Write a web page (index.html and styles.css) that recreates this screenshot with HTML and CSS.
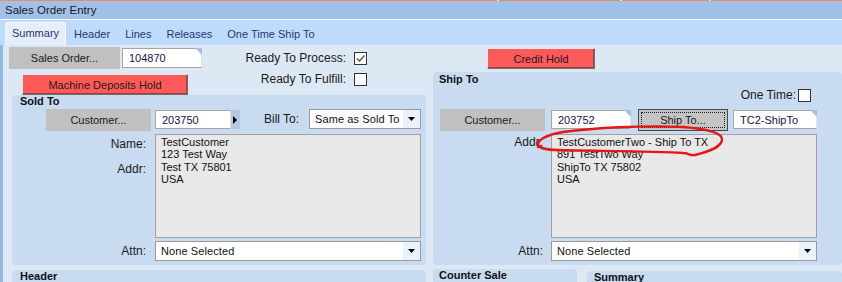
FILE: index.html
```html
<!DOCTYPE html>
<html lang="en">
<head>
    <meta charset="UTF-8">
    <meta name="viewport" content="width=device-width, initial-scale=1.0">
    <title>Sales Order Entry</title>
    <link rel="stylesheet" href="styles.css">
</head>
<body>
    <div class="accent"><span class="seg s1"></span><span class="seg s2"></span><span class="seg s3"></span><span class="seg s4"></span></div>
    <div class="titlebar">Sales Order Entry</div>

    <!-- Tabs -->
    <div class="tabs">
        <div class="tab active">Summary</div>
        <div class="tab">Header</div>
        <div class="tab">Lines</div>
        <div class="tab">Releases</div>
        <div class="tab">One Time Ship To</div>
    </div>

    <div class="content">
        <div class="col-left">
            <div class="order-area">
                <div class="order-col">
                    <div class="order-row">
                        <button class="btn gray order-btn">Sales Order...</button>
                        <div class="input fold order-input">104870</div>
                    </div>
                    <button class="btn red machine-btn">Machine Deposits Hold</button>
                </div>
                <div class="check-col">
                    <div class="check-row">
                        <span class="label">Ready To Process:</span>
                        <span class="check"><svg width="11" height="11" viewBox="0 0 11 11"><path d="M2 5.5 L4.5 8 L9.5 2.5" fill="none" stroke="#555" stroke-width="1.4"/></svg></span>
                    </div>
                    <div class="check-row">
                        <span class="label">Ready To Fulfill:</span>
                        <span class="check"></span>
                    </div>
                </div>
            </div>

            <!-- Sold To -->
            <section class="panel sold-to">
                <h3 class="panel-title">Sold To</h3>
                <div class="cust-row">
                    <button class="btn gray cust-btn">Customer...</button>
                    <div class="input-group">
                        <div class="input sold-input">203750</div>
                        <span class="arrow-btn"><svg width="5" height="8" viewBox="0 0 5 8"><path d="M0 0 L4 4 L0 8 Z" fill="#000"/></svg></span>
                    </div>
                    <span class="label bill-label">Bill To:</span>
                    <div class="select bill-select">
                        <span class="select-text">Same as Sold To</span>
                        <span class="select-arrow"><svg width="7" height="4" viewBox="0 0 7 4"><path d="M0 0 L7 0 L3.5 4 Z" fill="#000"/></svg></span>
                    </div>
                </div>
                <div class="field-row">
                    <div class="field-labels sold-labels">
                        <span class="label name-label">Name:</span>
                        <span class="label addr-label">Addr:</span>
                    </div>
                    <div class="textarea">TestCustomer<br>123 Test Way<br>Test TX 75801<br>USA</div>
                </div>
                <div class="attn-row">
                    <span class="label attn-label sold-labels">Attn:</span>
                    <div class="select attn-select">
                        <span class="select-text">None Selected</span>
                        <span class="select-arrow"><svg width="7" height="4" viewBox="0 0 7 4"><path d="M0 0 L7 0 L3.5 4 Z" fill="#000"/></svg></span>
                    </div>
                </div>
            </section>

            <section class="panel header-panel">
                <h3 class="panel-title">Header</h3>
            </section>
        </div>

        <div class="col-right">
            <div class="credit-row">
                <button class="btn red credit-btn">Credit Hold</button>
            </div>

            <!-- Ship To -->
            <section class="panel ship-to">
                <h3 class="panel-title">Ship To</h3>
                <div class="one-time">
                    <span class="label">One Time:</span>
                    <span class="check"></span>
                </div>
                <div class="cust-row ship-row">
                    <button class="btn gray cust-btn">Customer...</button>
                    <div class="input fold ship-cust">203752</div>
                    <button class="btn focus shipto-btn"><span class="focus-ring">Ship To...</span></button>
                    <div class="input fold ship-code">TC2-ShipTo</div>
                </div>
                <div class="field-row">
                    <div class="field-labels ship-labels">
                        <span class="label ship-addr">Addr:</span>
                    </div>
                    <div class="textarea">TestCustomerTwo - Ship To TX<br>891 TestTwo Way<br>ShipTo TX 75802<br>USA</div>
                </div>
                <div class="attn-row">
                    <span class="label attn-label ship-labels">Attn:</span>
                    <div class="select attn-select">
                        <span class="select-text">None Selected</span>
                        <span class="select-arrow"><svg width="7" height="4" viewBox="0 0 7 4"><path d="M0 0 L7 0 L3.5 4 Z" fill="#000"/></svg></span>
                    </div>
                </div>
                <!-- hand-drawn highlight over the first address line -->
                <svg class="scribble" width="196" height="38" viewBox="0 0 196 38">
                    <path d="M5 23 C3 16, 13 11, 30 8 C60 4, 110 1, 150 3 C175 5, 190 9, 189 16 C188 23, 178 27, 162 31 C157 32, 156 29, 150 29 C120 27, 60 27, 25 26 C14 26, 6 25, 4 19" fill="none" stroke="#e81515" stroke-width="2.4" stroke-linecap="round"/>
                </svg>
            </section>

            <div class="bottom-row">
                <section class="panel counter-panel">
                    <h3 class="panel-title">Counter Sale</h3>
                </section>
                <section class="panel summary-panel">
                    <h3 class="panel-title">Summary</h3>
                </section>
            </div>
        </div>
    </div>
</body>
</html>
```

FILE: styles.css
```css
body {
    margin: 0;
    width: 842px;
    height: 282px;
    overflow: hidden;
    font-family: "Liberation Sans", Arial, sans-serif;
    color: #111;
    background-color: #dde8f5;
}
.accent {
    display: flex;
    height: 1px;
    gap: 2px;
    background-color: #fff;
}
.seg {
    background-color: #f28a5a;
}
.s1 { width: 497px; }
.s2 { width: 121px; }
.s3 { width: 87px; }
.s4 { flex: 1; }
.titlebar {
    height: 18px;
    line-height: 18px;
    padding-left: 5px;
    font-size: 11.5px;
    background-color: #9fc1e9;
    color: #1a1a1a;
}
.tabs {
    display: flex;
    align-items: flex-end;
    gap: 1px;
    height: 26px;
    padding-left: 5px;
    border-top: 1px solid #f4f8fd;
    background-color: #bfdbfb;
    box-sizing: border-box;
}
.tab {
    padding: 0 7px;
    height: 21px;
    line-height: 21px;
    font-size: 11px;
    color: #1b3a78;
}
.tab.active {
    height: 23px;
    line-height: 22px;
    background-color: #e6eefa;
    border-radius: 3px 3px 0 0;
    box-shadow: inset 1px 1px 0 #f6f9fd, inset -1px 0 0 #f6f9fd;
}
.content {
    display: flex;
    height: 237px;
    border-left: 3px solid #94b8e6;
}
.col-left {
    width: 423px;
}
.col-right {
    flex: 1;
    margin-left: 7px;
}

/* controls */
.btn {
    display: block;
    margin: 0;
    padding: 0;
    font-family: inherit;
    font-size: 11px;
    color: #1a1a1a;
    box-sizing: border-box;
}
.btn.gray {
    border: none;
    background-color: #c0c0c0;
}
.btn.red {
    background-color: #ff5a5a;
    border: 1px solid;
    border-color: #e8e8e8 #6e6e6e #6e6e6e #e8e8e8;
    box-shadow: inset -1px -1px 0 #a04040;
}
.btn.focus {
    background-color: #c4c4c4;
    border: 1px solid #4a4a4a;
    padding: 2px;
}
.focus-ring {
    display: flex;
    align-items: center;
    justify-content: center;
    height: 100%;
    border: 1px dotted #222;
    box-sizing: border-box;
}
.input {
    position: relative;
    height: 19px;
    line-height: 18px;
    padding-left: 6px;
    font-size: 11px;
    color: #20104a;
    background-color: #fff;
    border: 1px solid #a6a6a6;
    border-right-color: #e4e4e4;
    box-sizing: border-box;
}
.input.fold::after {
    content: "";
    position: absolute;
    top: -1px;
    right: -1px;
    border-top: 7px solid #a9bfdc;
    border-left: 7px solid transparent;
}
.label {
    font-size: 12px;
    line-height: 13px;
    color: #1a1a1a;
}
.check {
    display: flex;
    align-items: center;
    justify-content: center;
    width: 13px;
    height: 13px;
    border: 1px solid #333;
    background-color: #fff;
    box-sizing: border-box;
}
.select {
    display: flex;
    height: 20px;
    background-color: #fff;
    border: 1px solid #9a9a9a;
    box-sizing: border-box;
    font-size: 11px;
}
.select-text {
    flex: 1;
    line-height: 18px;
    padding-left: 5px;
    letter-spacing: 0.1px;
}
.select-arrow {
    display: flex;
    align-items: center;
    justify-content: center;
    width: 17px;
    background-color: #eaf2fb;
}
.textarea {
    width: 266px;
    height: 104px;
    padding: 1px 0 0 5px;
    font-size: 11px;
    line-height: 12.4px;
    background-color: #e8e8e8;
    border: 1px solid #a2a2a2;
    box-sizing: border-box;
}

/* top area */
.order-area {
    display: flex;
    padding-top: 2px;
}
.order-col {
    padding-left: 6px;
}
.order-row {
    display: flex;
    gap: 2px;
}
.order-btn {
    width: 111px;
    height: 22px;
}
.order-input {
    width: 80px;
    height: 20px;
    margin-top: 1px;
}
.machine-btn {
    width: 166px;
    height: 21px;
    margin: 5px 0 0 13px;
}
.check-col {
    display: flex;
    flex-direction: column;
    gap: 8px;
    width: 165px;
    padding-top: 5px;
}
.check-row {
    display: flex;
    justify-content: flex-end;
    align-items: center;
    gap: 8px;
}
.credit-row {
    padding: 3px 0 0 54px;
    height: 27px;
    box-sizing: border-box;
}
.credit-btn {
    width: 108px;
    height: 21px;
}

/* panels */
.panel {
    position: relative;
    background-color: #c9dbf1;
    border-radius: 4px;
}
.panel-title {
    margin: 0;
    font-size: 11px;
    font-weight: bold;
    line-height: 13px;
    padding-left: 8px;
    color: #111;
}
.sold-to {
    margin-left: 9px;
    width: 414px;
    height: 170px;
}
.header-panel {
    margin: 5px 0 0 9px;
    width: 414px;
    height: 20px;
}
.cust-row {
    display: flex;
    align-items: flex-start;
    margin-top: 1px;
    padding: 0 5px 0 34px;
}
.cust-btn {
    width: 105px;
    height: 22px;
}
.input-group {
    display: flex;
    margin: 1px 0 0 4px;
}
.sold-input {
    width: 76px;
}
.arrow-btn {
    display: flex;
    align-items: center;
    justify-content: center;
    width: 9px;
    height: 19px;
    background-color: #b3c7e1;
}
.bill-label {
    margin-left: 24px;
    line-height: 20px;
}
.bill-select {
    width: 112px;
    margin-left: auto;
}
.field-row {
    display: flex;
    gap: 9px;
    margin-top: 3px;
}
.field-labels {
    display: flex;
    flex-direction: column;
    align-items: flex-end;
}
.sold-labels {
    width: 134px;
}
.name-label {
    margin-top: 3px;
    line-height: 14px;
}
.addr-label {
    margin-top: 11px;
    line-height: 14px;
}
.attn-row {
    display: flex;
    gap: 9px;
    margin-top: 3px;
}
.attn-label {
    line-height: 21px;
    text-align: right;
}
.attn-select {
    width: 266px;
}

/* ship to */
.ship-to {
    height: 193px;
}
.ship-to .panel-title {
    padding-left: 6px;
    line-height: 14px;
}
.one-time {
    display: flex;
    justify-content: flex-end;
    align-items: center;
    gap: 2px;
    margin-top: 3px;
    padding-right: 31px;
    height: 13px;
}
.ship-row {
    margin-top: 7px;
    padding-left: 7px;
}
.ship-cust {
    width: 80px;
    margin: 1px 0 0 6px;
}
.shipto-btn {
    width: 90px;
    height: 22px;
    margin-left: 7px;
}
.ship-code {
    width: 84px;
    margin: 1px 0 0 5px;
}
.ship-to .field-row,
.ship-to .attn-row {
    gap: 8px;
}
.ship-labels {
    width: 110px;
}
.ship-addr {
    margin-top: 1px;
    line-height: 14px;
}
.scribble {
    position: absolute;
    left: 100px;
    top: 52px;
}
.bottom-row {
    display: flex;
    margin-top: 3px;
}
.counter-panel {
    width: 144px;
    height: 20px;
    margin-top: 1px;
}
.counter-panel .panel-title {
    padding-left: 6px;
}
.summary-panel {
    flex: 1;
    height: 20px;
    margin: 3px 0 0 10px;
}
.summary-panel .panel-title {
    padding-left: 7px;
}
```
